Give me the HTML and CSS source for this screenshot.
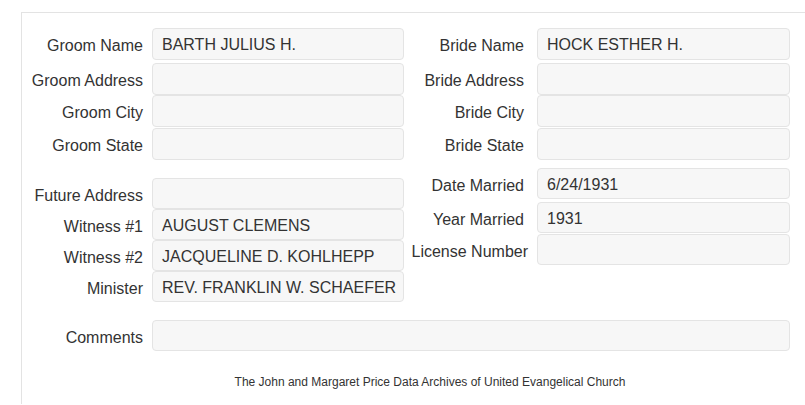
FILE: index.html
```html
<!DOCTYPE html>
<html>
<head>
<meta charset="utf-8">
<link rel="stylesheet" href="styles.css">
</head>
<body>
<div class="panel">
  <div class="columns">
    <div class="col col-left">
      <div class="group g1">
        <div class="row r-first"><label class="lbl">Groom Name</label><div class="field">BARTH JULIUS H.</div></div>
        <div class="row"><label class="lbl">Groom Address</label><div class="field"></div></div>
        <div class="row r-city"><label class="lbl">Groom City</label><div class="field"></div></div>
        <div class="row r-state"><label class="lbl">Groom State</label><div class="field"></div></div>
      </div>
      <div class="group g2-left">
        <div class="row short"><label class="lbl">Future Address</label><div class="field"></div></div>
        <div class="row short"><label class="lbl">Witness #1</label><div class="field">AUGUST CLEMENS</div></div>
        <div class="row short"><label class="lbl">Witness #2</label><div class="field">JACQUELINE D. KOHLHEPP</div></div>
        <div class="row short"><label class="lbl">Minister</label><div class="field">REV. FRANKLIN W. SCHAEFER</div></div>
      </div>
    </div>
    <div class="col col-right">
      <div class="group g1">
        <div class="row r-first"><label class="lbl">Bride Name</label><div class="field">HOCK ESTHER H.</div></div>
        <div class="row"><label class="lbl">Bride Address</label><div class="field"></div></div>
        <div class="row r-city"><label class="lbl">Bride City</label><div class="field"></div></div>
        <div class="row r-state"><label class="lbl">Bride State</label><div class="field"></div></div>
      </div>
      <div class="group g2-right">
        <div class="row short r-date"><label class="lbl">Date Married</label><div class="field">6/24/1931</div></div>
        <div class="row short r-year"><label class="lbl">Year Married</label><div class="field">1931</div></div>
        <div class="row short r-lic"><label class="lbl lbl-wide">License Number</label><div class="field"></div></div>
      </div>
    </div>
  </div>
  <div class="row comments"><label class="lbl">Comments</label><div class="field"></div></div>
  <div class="footer">The John and Margaret Price Data Archives of United Evangelical Church</div>
</div>
</body>
</html>
```
FILE: styles.css
```css
html, body {
  margin: 0;
  padding: 0;
  background: #ffffff;
}
body {
  font-family: "Liberation Sans", Arial, sans-serif;
  color: #333333;
  font-size: 16px;
}
.panel {
  margin-top: 12px;
  margin-left: 21px;
  border-top: 1px solid #e3e3e3;
  border-left: 1px solid #e3e3e3;
  height: 392px;
  padding-top: 15px;
  box-sizing: border-box;
}
.columns {
  display: flex;
}
.col-left {
  width: 382px;
}
.col-right {
  width: 386px;
}
.group {
  display: flex;
  flex-direction: column;
}
.row {
  display: flex;
  align-items: center;
  height: 32px;
}
.r-first { margin-bottom: 3px; }
.r-state { margin-top: 1px; }
.short { height: 31px; }
.g2-left { margin-top: 18px; }
.g2-right { margin-top: 8px; }
.r-year { margin-top: 3px; }
.r-lic { margin-top: 1px; }
.lbl {
  width: 130px;
  flex: none;
  box-sizing: border-box;
  padding-right: 9px;
  padding-top: 4px;
  text-align: right;
  white-space: nowrap;
  line-height: 20px;
}
.col-right .lbl {
  width: 133px;
  padding-right: 13px;
}
.col-right .lbl-wide {
  padding-right: 9px;
}
.col-right .r-date .lbl,
.col-right .r-year .lbl { padding-top: 4px; }
.col-right .r-lic .lbl { padding-top: 5px; }
.field {
  flex: none;
  width: 252px;
  height: 100%;
  box-sizing: border-box;
  background: #f7f7f7;
  border: 1px solid #e4e4e4;
  border-radius: 4px;
  padding: 2px 9px 0;
  display: flex;
  align-items: center;
  white-space: nowrap;
  overflow: hidden;
}
.col-right .field {
  width: 253px;
}
.comments {
  margin-top: 18px;
  height: 31px;
}
.comments .lbl { padding-top: 5px; }
.comments .field {
  width: 638px;
}
.footer {
  margin-top: 23px;
  font-size: 12px;
  line-height: 17px;
  text-align: center;
  padding-left: 33px;
  color: #333333;
}
```
